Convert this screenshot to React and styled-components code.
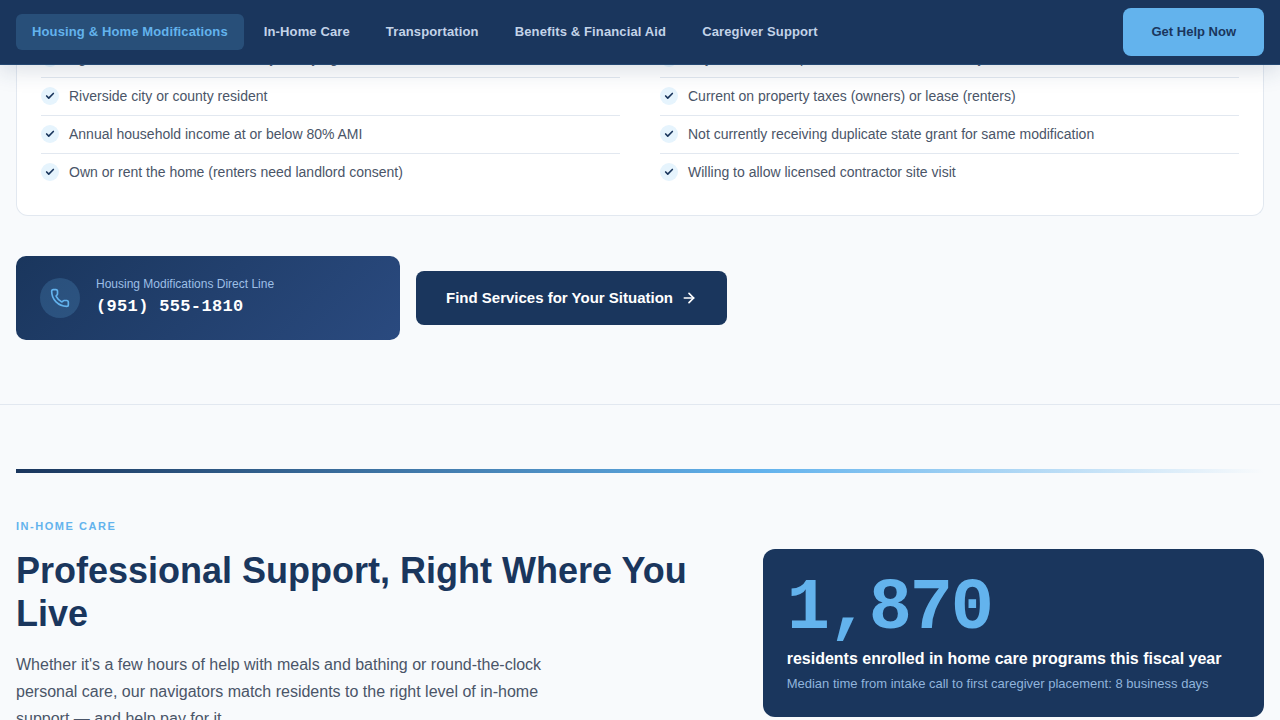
import styled, { createGlobalStyle } from "styled-components";
import { ArrowRight, Check, Phone } from "lucide-react";

const NAV_LINKS = [
  { label: "Housing & Home Modifications", href: "#housing" },
  { label: "In-Home Care", href: "#in-home-care" },
  { label: "Transportation", href: "#transportation" },
  { label: "Benefits & Financial Aid", href: "#benefits" },
  { label: "Caregiver Support", href: "#caregivers" },
];

const ELIGIBILITY = [
  [
    "Age 60+ or documented disability at any age",
    "Riverside city or county resident",
    "Annual household income at or below 80% AMI",
    "Own or rent the home (renters need landlord consent)",
  ],
  [
    "Physician or therapist documentation of mobility need",
    "Current on property taxes (owners) or lease (renters)",
    "Not currently receiving duplicate state grant for same modification",
    "Willing to allow licensed contractor site visit",
  ],
];

const GlobalStyle = createGlobalStyle`
  * {
    box-sizing: border-box;
    margin: 0;
    padding: 0;
  }

  body {
    background-color: #f8fafc;
    color: #4a5568;
    font-family: "Liberation Sans", Arial, sans-serif;
  }

  button {
    font-family: inherit;
    cursor: pointer;
  }
`;

const Header = styled.header`
  position: sticky;
  top: 0;
  z-index: 10;
  height: 65px;
  padding: 0 16px;
  display: flex;
  align-items: center;
  justify-content: space-between;
  background-color: #1a365d;
  border-bottom: 1px solid rgba(99, 179, 237, 0.15);
  box-shadow: 0 4px 24px rgba(26, 54, 93, 0.18);
`;

const Nav = styled.nav`
  display: flex;
  align-items: center;
  gap: 4px;
`;

const NavLink = styled.a`
  padding: 8px 16px;
  border-radius: 6px;
  background-color: ${({ $active }) =>
    $active ? "rgba(99, 179, 237, 0.2)" : "transparent"};
  color: ${({ $active }) => ($active ? "#63b3ed" : "#c3d3e8")};
  font-size: 13px;
  font-weight: 700;
  line-height: 20px;
  letter-spacing: 0.01em;
  text-decoration: none;
  white-space: nowrap;
`;

const HelpButton = styled.button`
  padding: 14px 28px;
  border: none;
  border-radius: 8px;
  background-color: #63b3ed;
  color: #1a365d;
  font-size: 13px;
  font-weight: 700;
  line-height: 20px;
  white-space: nowrap;
`;

/* slides under the sticky header */
const Main = styled.main`
  margin-top: -65px;
`;

const HousingSection = styled.section`
  padding: 0 16px 64px;
  border-bottom: 1px solid #e2e8f0;
`;

const EligibilityCard = styled.div`
  padding: 40px 24px 24px;
  display: grid;
  grid-template-columns: 1fr 1fr;
  gap: 40px;
  background-color: #ffffff;
  border: 1px solid #e2e8f0;
  border-top: none;
  border-radius: 0 0 12px 12px;
`;

const CheckList = styled.ul`
  list-style: none;
`;

const CheckItem = styled.li`
  padding: 8px 0;
  display: flex;
  align-items: flex-start;
  gap: 10px;
  font-size: 14px;
  line-height: 21px;

  &:not(:last-child) {
    border-bottom: 1px solid #e2e8f0;
  }
`;

const CheckMark = styled.span`
  width: 18px;
  height: 18px;
  margin-top: 1px;
  flex-shrink: 0;
  display: flex;
  align-items: center;
  justify-content: center;
  border-radius: 50%;
  background-color: #e6f4fd;
  color: #1a365d;
`;

const Actions = styled.div`
  margin-top: 40px;
  display: flex;
  flex-wrap: wrap;
  align-items: center;
  gap: 16px;
`;

const PhoneCard = styled.a`
  width: 384px;
  padding: 20px 24px;
  display: flex;
  align-items: center;
  gap: 16px;
  border-radius: 10px;
  background: linear-gradient(135deg, #1a365d 0%, #2a4a7f 100%);
  text-decoration: none;
`;

const PhoneIcon = styled.span`
  width: 40px;
  height: 40px;
  flex-shrink: 0;
  display: flex;
  align-items: center;
  justify-content: center;
  border-radius: 50%;
  background-color: rgba(99, 179, 237, 0.2);
  color: #63b3ed;
`;

const PhoneLabel = styled.p`
  margin-bottom: 2px;
  color: #9dbfe6;
  font-size: 12px;
  line-height: 16px;
`;

const PhoneNumber = styled.p`
  color: #ffffff;
  font-family: "Liberation Mono", "Courier New", monospace;
  font-size: 17px;
  font-weight: 700;
  line-height: 26px;
  letter-spacing: 0.02em;
`;

const FindButton = styled.button`
  padding: 16px 30px;
  display: flex;
  align-items: center;
  gap: 8px;
  border: none;
  border-radius: 8px;
  background-color: #1a365d;
  color: #ffffff;
  font-size: 15px;
  font-weight: 700;
  line-height: 22px;
`;

const CareSection = styled.section`
  padding: 64px 16px;
`;

const GradientBar = styled.div`
  height: 4px;
  background: linear-gradient(90deg, #1a365d 0%, #63b3ed 60%, transparent 100%);
`;

const Eyebrow = styled.p`
  margin: 40px 0 10px;
  color: #63b3ed;
  font-size: 11px;
  font-weight: 700;
  line-height: 26px;
  letter-spacing: 0.14em;
  text-transform: uppercase;
`;

const CareGrid = styled.div`
  display: grid;
  grid-template-columns: repeat(12, 1fr);
  align-items: start;
  gap: 32px;
`;

const CareIntro = styled.div`
  grid-column: span 7;
`;

const Title = styled.h2`
  color: #1a365d;
  font-size: 36px;
  font-weight: 700;
  line-height: 43px;
`;

const Lead = styled.p`
  max-width: 560px;
  margin-top: 16px;
  font-size: 16px;
  line-height: 27px;
`;

const StatCard = styled.aside`
  grid-column: span 5;
  padding: 24px;
  border-radius: 12px;
  background-color: #1a365d;
`;

const StatNumber = styled.p`
  margin-bottom: 4px;
  color: #63b3ed;
  font-family: "Liberation Mono", "Courier New", monospace;
  font-size: 72px;
  font-weight: 700;
  line-height: 72px;
  letter-spacing: -0.03em;
`;

const StatLabel = styled.p`
  margin-bottom: 6px;
  color: #ffffff;
  font-size: 16px;
  font-weight: 700;
  line-height: 20px;
`;

const StatNote = styled.p`
  color: #90b4dc;
  font-size: 13px;
  line-height: 18px;
`;

const App = () => {
  return (
    <>
      <GlobalStyle />
      <Header>
        <Nav aria-label="Services">
          {NAV_LINKS.map((link, index) => (
            <NavLink key={link.href} href={link.href} $active={index === 0}>
              {link.label}
            </NavLink>
          ))}
        </Nav>
        <HelpButton type="button">Get Help Now</HelpButton>
      </Header>

      <Main>
        <HousingSection id="housing">
          <EligibilityCard>
            {ELIGIBILITY.map((items, index) => (
              <CheckList key={index}>
                {items.map((item) => (
                  <CheckItem key={item}>
                    <CheckMark>
                      <Check size={10} strokeWidth={4} aria-hidden="true" />
                    </CheckMark>
                    {item}
                  </CheckItem>
                ))}
              </CheckList>
            ))}
          </EligibilityCard>

          <Actions>
            <PhoneCard href="tel:9515551810">
              <PhoneIcon>
                <Phone size={20} strokeWidth={2} aria-hidden="true" />
              </PhoneIcon>
              <div>
                <PhoneLabel>Housing Modifications Direct Line</PhoneLabel>
                <PhoneNumber>(951) 555-1810</PhoneNumber>
              </div>
            </PhoneCard>
            <FindButton type="button">
              Find Services for Your Situation
              <ArrowRight size={16} strokeWidth={2.5} aria-hidden="true" />
            </FindButton>
          </Actions>
        </HousingSection>

        <CareSection id="in-home-care">
          <GradientBar />
          <Eyebrow>In-Home Care</Eyebrow>
          <CareGrid>
            <CareIntro>
              <Title>Professional Support, Right Where You Live</Title>
              <Lead>
                Whether it's a few hours of help with meals and bathing or
                round-the-clock personal care, our navigators match residents
                to the right level of in-home support — and help pay for it.
              </Lead>
            </CareIntro>
            <StatCard>
              <StatNumber>1,870</StatNumber>
              <StatLabel>
                residents enrolled in home care programs this fiscal year
              </StatLabel>
              <StatNote>
                Median time from intake call to first caregiver placement: 8
                business days
              </StatNote>
            </StatCard>
          </CareGrid>
        </CareSection>
      </Main>
    </>
  );
};

export default App;
